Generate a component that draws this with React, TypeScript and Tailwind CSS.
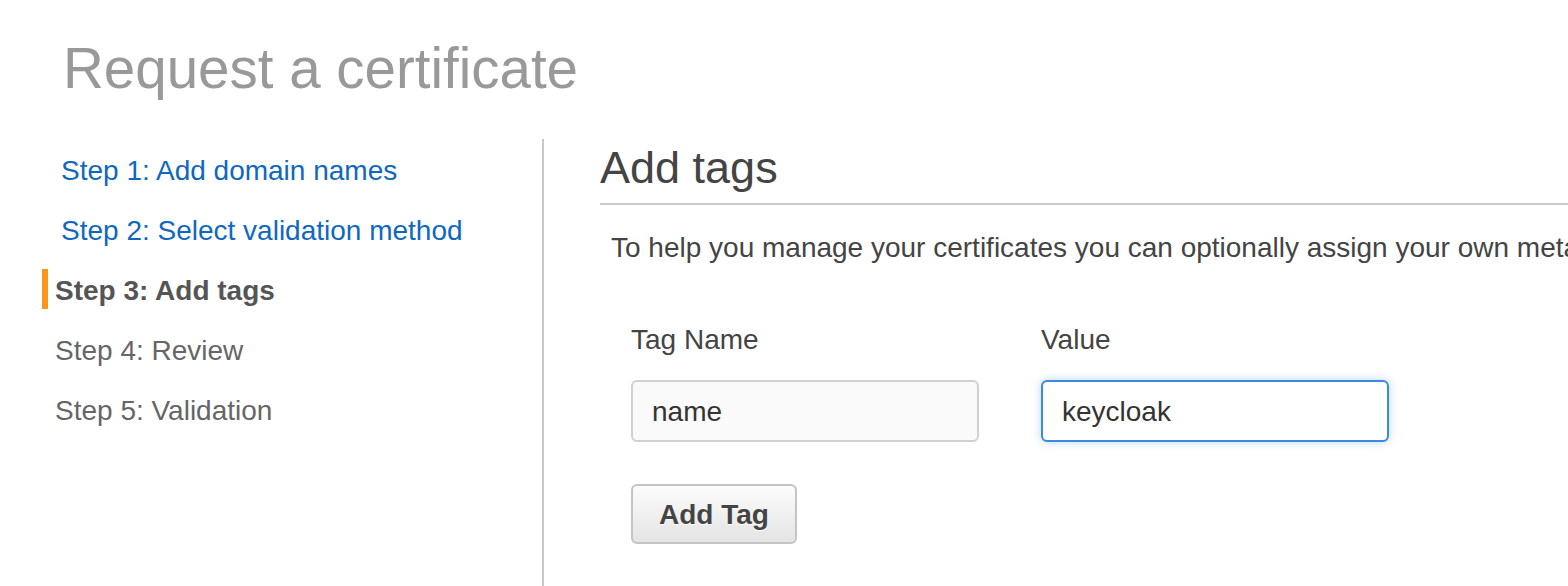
import React from "react";

export default function App() {
  return (
    <div
      className="w-[1568px] h-[586px] overflow-hidden bg-white"
      style={{ fontFamily: '"Liberation Sans", Arial, Helvetica, sans-serif' }}
    >
      <div className="pl-[63px] pt-[41px]">
        <h1 className="text-[56.5px] leading-none text-[#999999] font-normal">Request a certificate</h1>
      </div>

      <div className="mt-[41px] flex h-[448px]">
        {/* Left nav */}
        <nav className="w-[542px] shrink-0 pt-[2px] pl-[42px] text-[28px]">
          <div className="h-[60px] flex items-center pl-[19px] text-[#0f68c0]">Step 1: Add domain names</div>
          <div className="h-[60px] flex items-center pl-[19px] text-[#0f68c0]">Step 2: Select validation method</div>
          <div className="h-[60px] flex items-center">
            <div className="h-[40px] w-[6px] bg-[#f7981d] -mt-[4px]" />
            <span className="pl-[7px] font-bold text-[#555555]">Step 3: Add tags</span>
          </div>
          <div className="h-[60px] flex items-center pl-[13px] text-[#666666]">Step 4: Review</div>
          <div className="h-[60px] flex items-center pl-[13px] text-[#666666]">Step 5: Validation</div>
        </nav>

        <div className="w-[2px] shrink-0 bg-[#c8c8c8]" />

        {/* Content */}
        <div className="flex-1 min-w-0 pl-[56px] pt-[6px] overflow-hidden">
          <div className="border-b-2 border-[#cccccc] pb-[13px]">
            <h2 className="text-[45px] leading-none text-[#444444] font-normal">Add tags</h2>
          </div>
          <p className="mt-[29px] pl-[11px] text-[28px] leading-[28px] text-[#444444] whitespace-nowrap">
            To help you manage your certificates you can optionally assign your own metadata to each certificate in the form of tags.
          </p>

          <div className="pl-[31px] mt-[64px]">
            <div className="flex gap-[62px]">
              <div className="w-[348px]">
                <div className="text-[28px] leading-[28px] text-[#444444]">Tag Name</div>
                <div className="mt-[26px] h-[62px] rounded-[6px] border-2 border-[#d0d0d0] bg-[#fafafa] flex items-center pl-[19px] pt-[3px] text-[28px] text-[#333333]">
                  name
                </div>
              </div>
              <div className="w-[348px]">
                <div className="text-[28px] leading-[28px] text-[#444444]">Value</div>
                <div className="mt-[26px] h-[62px] rounded-[6px] border-2 border-[#3a8ae0] bg-white shadow-[0_0_10px_rgba(60,140,230,0.35)] flex items-center pl-[19px] pt-[3px] text-[28px] text-[#333333]">
                  keycloak
                </div>
              </div>
            </div>

            <button className="mt-[42px] w-[166px] h-[60px] rounded-[6px] border-2 border-[#c4c4c4] bg-gradient-to-b from-[#fcfcfc] to-[#e4e4e4] pt-[3px] text-[28px] font-bold text-[#444444] [text-shadow:0_1px_0_#ffffff]">
              Add Tag
            </button>
          </div>
        </div>
      </div>
    </div>
  );
}
